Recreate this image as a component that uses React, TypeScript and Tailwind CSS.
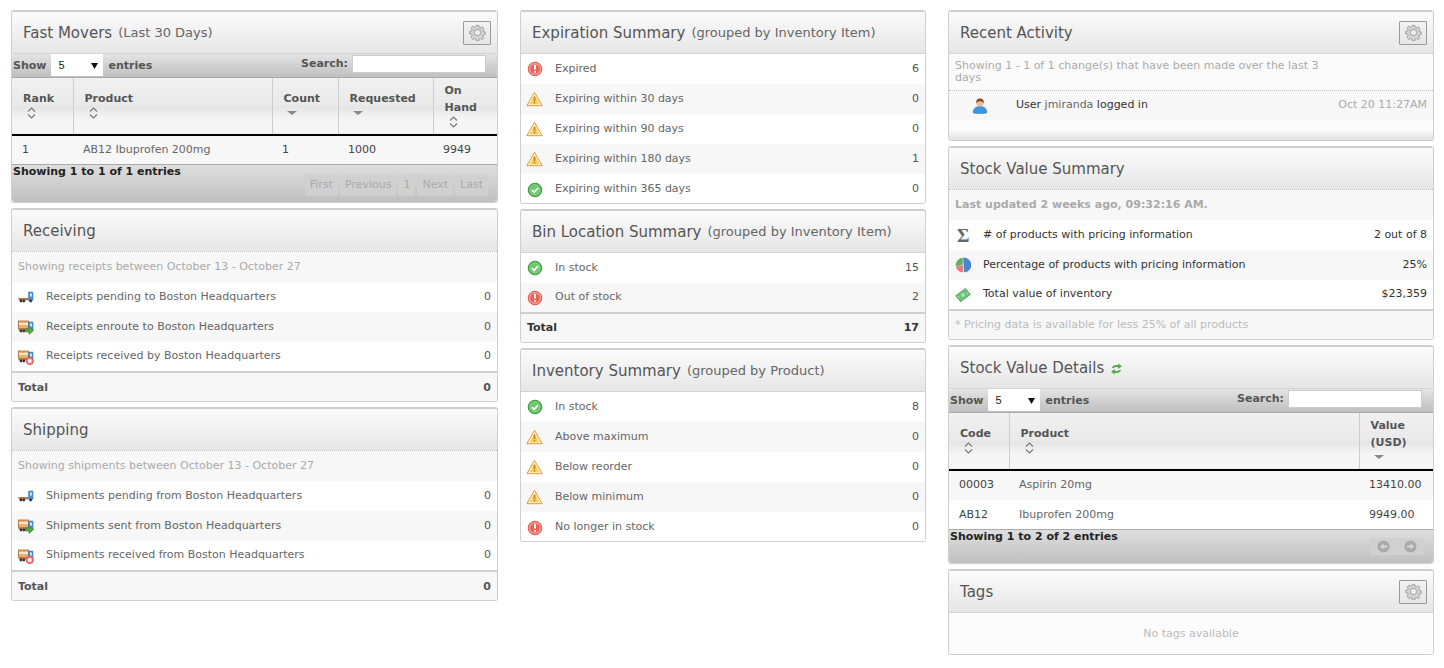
import type { ReactNode } from 'react'

const ErrorIcon = () => (
  <svg width="16" height="16" viewBox="0 0 16 16">
    <circle cx="8" cy="8" r="6.8" fill="#f58a80" stroke="#d9594f" />
    <circle cx="8" cy="8" r="5.2" fill="#ee5f55" stroke="#f9b5ae" strokeWidth="0.7" />
    <rect x="7" y="3.800" width="2" height="5" rx="0.8" fill="#fff" />
    <rect x="7" y="10" width="2" height="2" rx="0.8" fill="#fff" />
  </svg>
)

const WarnIcon = () => (
  <svg width="17" height="16" viewBox="0 0 17 16" className="-ml-[1px]">
    <path d="M8.500 1.300 16.200 14.700H.8Z" fill="#fff2c4" stroke="#e39a3f" strokeLinejoin="round" />
    <path d="M8.500 4.500 13.300 13.200H3.700Z" fill="#fbcf5e" />
    <rect x="7.700" y="5.600" width="1.600" height="4.400" fill="#c77f22" />
    <rect x="7.700" y="10.800" width="1.600" height="1.600" fill="#c77f22" />
  </svg>
)

const OkIcon = () => (
  <svg width="16" height="16" viewBox="0 0 16 16">
    <circle cx="8" cy="8" r="6.8" fill="#5cb85c" stroke="#3c963c" />
    <circle cx="8" cy="8" r="5" fill="#6cc66c" stroke="#a5e0a5" strokeWidth="0.6" />
    <path d="M5 8.200 7.200 10.400 11 6" fill="none" stroke="#fff" strokeWidth="1.800" />
  </svg>
)

const TruckBase = ({ box }: { box: boolean }) => (
  <>
    {box ? <rect x="0.500" y="2" width="10" height="7.500" fill="#e9b06f" stroke="#a8683a" strokeWidth="0.8" /> : null}
    {box ? <rect x="1" y="4" width="9" height="2" fill="#fbe6c8" /> : null}
    <rect x="0.500" y="9" width="10" height="2.400" fill="#b9794a" />
    <rect x="10.500" y="3" width="4.500" height="8.400" rx="0.6" fill="#4b93d6" stroke="#2a6aa8" strokeWidth="0.5" />
    <rect x="12" y="4.500" width="1.800" height="3" fill="#dbeeff" />
    <circle cx="3" cy="12" r="1.400" fill="#333" />
    <circle cx="5.800" cy="12" r="1.400" fill="#333" />
    <circle cx="12.600" cy="12" r="1.400" fill="#333" />
  </>
)

const TruckPending = () => (
  <svg width="16" height="16" viewBox="0 0 16 16">
    <TruckBase box={false} />
  </svg>
)

const TruckSent = () => (
  <svg width="16" height="16" viewBox="0 0 16 16">
    <TruckBase box />
    <path d="M7.500 10h3.500V7.600l4.600 3.900-4.600 3.900V13H7.500Z" fill="#55a846" stroke="#2f7d2a" strokeWidth="0.6" />
  </svg>
)

const TruckReceived = () => (
  <svg width="16" height="16" viewBox="0 0 16 16">
    <TruckBase box />
    <circle cx="11.800" cy="12" r="3.600" fill="#f08a8a" stroke="#d9534f" />
    <rect x="10.200" y="10.500" width="3.200" height="3" fill="#fff" />
  </svg>
)

const UserIcon = () => (
  <svg width="16" height="16" viewBox="0 0 16 16">
    <path d="M1.200 14.800c0-4.300 2.800-6.300 6.800-6.300s6.800 2 6.800 6.300c-1.500 1-12.100 1-13.600 0Z" fill="#3f94e0" stroke="#2568a8" strokeWidth="0.5" />
    <circle cx="8" cy="5" r="3.600" fill="#eebd97" />
    <path d="M4.200 5.400C3.900 1.800 5.800.6 8 .6s4.100 1.200 3.800 4.800C10.800 3.500 9 3.200 8 3.200s-2.800.3-3.800 2.200Z" fill="#8a4a24" />
  </svg>
)

const PieIcon = () => (
  <svg width="16" height="16" viewBox="0 0 16 16">
    <path d="M8.600 1A7 7 0 0 1 9.400 15Z" fill="#4a86d8" stroke="#2d62ab" strokeWidth="0.5" />
    <path d="M7.400 1.200A7 7 0 0 0 1.100 9L7.400 7.600Z" fill="#5fb36a" stroke="#3d8c48" strokeWidth="0.5" />
    <path d="M1.400 10 7.600 8.800V15A7 7 0 0 1 1.400 10Z" fill="#ef7a7a" stroke="#cf4f4f" strokeWidth="0.5" />
  </svg>
)

const MoneyIcon = () => (
  <svg width="16" height="16" viewBox="0 0 16 16">
    <path d="M.6 8.800 10.400 1.400l5 6-9.800 7.400Z" fill="#6cc07a" stroke="#449a52" strokeWidth="0.7" />
    <circle cx="8" cy="8.100" r="2" fill="#a7e3b0" />
    <path d="M3 9 4.400 10.600M11.800 5.400 13 7" stroke="#d2f2d6" strokeWidth="0.8" />
  </svg>
)

const RefreshIcon = () => (
  <svg width="13" height="14" viewBox="0 0 13 14">
    <path d="M2 6C2.600 3.400 5.600 2.600 8.200 3.400V1.400L12 4.200 8.200 7V5.200C6.400 4.600 4.600 5 3.800 6Z" fill="#55a846" />
    <path d="M11 8c-.6 2.600-3.600 3.400-6.200 2.600v2L1 9.800 4.800 7v1.800c1.800.6 3.600.2 4.400-.8Z" fill="#55a846" />
  </svg>
)

const GearIcon = () => (
  <svg width="17" height="17" viewBox="0 0 24 24" fill="#d4d4d4" stroke="#9a9a9a" strokeWidth="1.300" strokeLinejoin="round">
    <path d="M10.200 2h3.600l.5 2.700 1.900.8 2.300-1.500 2.500 2.500-1.500 2.300.8 1.900 2.700.5v3.600l-2.700.5-.8 1.900 1.500 2.300-2.500 2.500-2.300-1.500-1.900.8-.5 2.700h-3.600l-.5-2.700-1.900-.8-2.300 1.500L3 18.500l1.500-2.300-.8-1.900L1 13.800v-3.600l2.700-.5.8-1.900L3 5.500 5.500 3l2.300 1.500 1.900-.8Z" />
    <circle cx="12" cy="12" r="4.500" fill="#ececec" />
  </svg>
)

const SortBoth = () => (
  <svg width="9" height="12" viewBox="0 0 9 12" fill="none" stroke="#777" strokeWidth="1.100" className="ml-[4px]">
    <path d="M1 4.500 4.500 1 8 4.500M1 7.500 4.500 11 8 7.500" />
  </svg>
)

const SortDesc = () => (
  <svg width="10" height="12" viewBox="0 0 10 12" className="ml-[3px]">
    <path d="M0 4h10L5 8Z" fill="#888" />
  </svg>
)

const GearButton = () => (
  <button className="flex h-[24px] w-[28px] items-center justify-center rounded-[1px] border border-[#999] bg-gradient-to-b from-[#f2f2f2] to-[#e6e6e6]">
    <GearIcon />
  </button>
)

function Panel({ children }: { children: ReactNode }) {
  return (
    <section className="overflow-hidden rounded-[3px] border border-t-2 border-[#cfcfcf] bg-white">{children}</section>
  )
}

function Header({ title, sub, dotted, gear, extra }: { title: string; sub?: string; dotted?: boolean; gear?: boolean; extra?: ReactNode }) {
  return (
    <div
      className={`flex h-[42px] items-center justify-between bg-gradient-to-b from-[#fbfbfb] to-[#e6e6e6] pl-[11px] pr-[6px] ${
        dotted ? 'border-b border-dotted border-[#bbb]' : 'border-b border-[#d4d4d4]'
      }`}
    >
      <h2 className="flex items-center pt-[1px] text-[15px] font-normal text-[#555]">
        {title}
        {sub ? <span className="ml-[6px] text-[13px] text-[#666]">{sub}</span> : null}
        {extra}
      </h2>
      {gear ? <GearButton /> : null}
    </div>
  )
}

function Row({ icon, label, value, even, strong, height = 'h-[30px]' }: { icon: ReactNode; label: string; value: string; even?: boolean; strong?: boolean; height?: string }) {
  return (
    <div className={`flex items-center px-[6px] ${height} ${even ? 'bg-[#f7f7f7]' : 'bg-white'}`}>
      <span className="flex w-[28px] shrink-0">{icon}</span>
      <span className={`flex-1 ${strong ? 'text-[#333]' : 'text-[#666]'}`}>{label}</span>
      <span className={strong ? 'text-[#333]' : 'text-[#555]'}>{value}</span>
    </div>
  )
}

const Total = ({ value }: { value: string }) => (
  <div className="flex h-[30px] items-center justify-between border-t-2 border-[#cfcfcf] bg-[#f7f7f7] px-[6px] pt-[2px] font-bold text-[#555]">
    <span>Total</span>
    <span>{value}</span>
  </div>
)

const Note = ({ children, bold }: { children: ReactNode; bold?: boolean }) => (
  <div className={`flex h-[30px] items-center bg-[#f7f7f7] px-[6px] text-[#aaa] ${bold ? 'font-bold' : ''}`}>{children}</div>
)

function Toolbar() {
  return (
    <div className="flex h-[24px] items-start justify-between rounded-t-[3px] border-b border-[#aaa] bg-gradient-to-b from-[#e4e4e4] to-[#bfbfbf] pl-[1px] pr-[11px] font-bold text-[#555]">
      <div className="flex items-center">
        <span className="pt-[3px]">Show</span>
        <div className="mx-[5px] flex h-[22px] w-[52px] items-center justify-between bg-white pl-[7px] pr-[5px] font-normal text-[#222] [font-family:'Liberation_Sans',sans-serif]">
          <span>5</span>
          <svg width="7" height="7" viewBox="0 0 7 7">
            <path d="M0 1h7L3.500 7Z" fill="#111" />
          </svg>
        </div>
        <span className="pt-[3px]">entries</span>
      </div>
      <label className="flex items-center gap-[4px] pt-[1px]">
        Search:
        <input className="h-[18px] w-[134px] border border-[#ccc] bg-white" />
      </label>
    </div>
  )
}

function HeadCell({ lines, sort, width }: { lines: string[]; sort: ReactNode; width?: string }) {
  return (
    <th className={`border-r border-[#ccc] pl-[11px] pr-[4px] text-left align-middle font-bold leading-[17px] text-[#555] last:border-r-0 ${width ?? ''}`}>
      {lines.map((l) => (
        <div key={l}>{l}</div>
      ))}
      <div className="flex h-[15px] items-start">{sort}</div>
    </th>
  )
}

const headBg = 'bg-[linear-gradient(to_bottom,#f1f1f1_0%,#e9e9e9_50%,#e3e3e3_50%,#f5f5f5_75%,#f5f5f5_100%)]'

function FastMovers() {
  return (
    <Panel>
      <Header title="Fast Movers" sub="(Last 30 Days)" gear />
      <Toolbar />
      <table className="w-full table-fixed border-collapse">
        <thead>
          <tr className={`h-[57px] border-b-2 border-black ${headBg}`}>
            <HeadCell lines={['Rank']} sort={<SortBoth />} width="w-[61px]" />
            <HeadCell lines={['Product']} sort={<SortBoth />} width="w-[199px]" />
            <HeadCell lines={['Count']} sort={<SortDesc />} width="w-[66px]" />
            <HeadCell lines={['Requested']} sort={<SortDesc />} width="w-[95px]" />
            <HeadCell lines={['On', 'Hand']} sort={<SortBoth />} />
          </tr>
        </thead>
        <tbody>
          <tr className="h-[29px] bg-[#f7f7f7] text-[#444]">
            <td className="pl-[10px]">1</td>
            <td className="pl-[10px] text-[#666]">AB12 Ibuprofen 200mg</td>
            <td className="pl-[10px]">1</td>
            <td className="pl-[10px]">1000</td>
            <td className="pl-[10px]">9949</td>
          </tr>
        </tbody>
      </table>
      <div className="flex h-[38px] flex-col rounded-b-[3px] border-t border-[#aaa] bg-gradient-to-b from-[#dedede] to-[#c0c0c0] pl-[1px] pr-[9px]">
        <div className="h-[13px] font-bold leading-[13px] text-[#222]">Showing 1 to 1 of 1 entries</div>
        <div className="-mt-[4px] flex justify-end gap-[2px] text-[#aaa]">
          {['First', 'Previous', '1', 'Next', 'Last'].map((p) => (
            <span key={p} className="flex h-[22px] items-center rounded-[2px] bg-[#d0d0d0] px-[5px]">
              {p}
            </span>
          ))}
        </div>
      </div>
    </Panel>
  )
}

function Flow({ title, note, rows }: { title: string; note: string; rows: [ReactNode, string][] }) {
  return (
    <Panel>
      <Header title={title} dotted />
      <Note>{note}</Note>
      {rows.map(([icon, label], i) => (
        <Row key={label} icon={icon} label={label} value="0" even={i % 2 === 1} height={i === 2 ? 'h-[29px]' : 'h-[30px]'} />
      ))}
      <Total value="0" />
    </Panel>
  )
}

function Summary({ title, sub, rows, total }: { title: string; sub: string; rows: [ReactNode, string, string][]; total?: string }) {
  const lastRow = total ? 'h-[29px]' : 'h-[29px] pt-[2px]'
  return (
    <Panel>
      <Header title={title} sub={sub} />
      {rows.map(([icon, label, value], i) => (
        <Row key={label} icon={icon} label={label} value={value} even={i % 2 === 1} height={i === rows.length - 1 ? lastRow : 'h-[30px]'} />
      ))}
      {total ? (
        <div className="flex h-[30px] items-center justify-between border-t-2 border-[#cfcfcf] bg-[#f7f7f7] px-[6px] font-bold text-[#333]">
          <span>Total</span>
          <span>{total}</span>
        </div>
      ) : null}
    </Panel>
  )
}

function RecentActivity() {
  return (
    <Panel>
      <Header title="Recent Activity" gear />
      <div className="h-[37px] border-b border-dotted border-[#bbb] bg-[#fafafa] px-[6px] pt-[6px] leading-[12px] text-[#aaa]">
        <p className="w-[380px]">Showing 1 - 1 of 1 change(s) that have been made over the last 3 days</p>
      </div>
      <div className="flex h-[29px] items-center bg-[#f7f7f7] pl-[23px] pr-[6px]">
        <span className="flex w-[44px]">
          <UserIcon />
        </span>
        <span className="flex-1 text-[#333]">
          User <span className="text-[#666]">jmiranda</span> logged in
        </span>
        <span className="text-[#aaa]">Oct 20 11:27AM</span>
      </div>
      <div className="h-[20px] bg-gradient-to-b from-[#fdfdfd] via-[#fafafa] to-[#e0e0e0]" />
    </Panel>
  )
}

function StockSummary() {
  return (
    <Panel>
      <Header title="Stock Value Summary" dotted />
      <Note bold>Last updated 2 weeks ago, 09:32:16 AM.</Note>
      <Row icon={<span className="ml-[2px] text-[19px] font-bold leading-none text-[#666] [font-family:'Liberation_Serif',serif]">Σ</span>} label="# of products with pricing information" value="2 out of 8" strong />
      <Row icon={<PieIcon />} label="Percentage of products with pricing information" value="25%" even strong />
      <Row icon={<MoneyIcon />} label="Total value of inventory" value="$23,359" strong height="h-[29px]" />
      <div className="flex h-[30px] items-center border-t-2 border-[#cfcfcf] bg-[#f7f7f7] px-[6px] text-[#bbb]">
        * Pricing data is available for less 25% of all products
      </div>
    </Panel>
  )
}

function StockDetails() {
  return (
    <Panel>
      <Header title="Stock Value Details" extra={<span className="ml-[6px] mt-[2px] flex"><RefreshIcon /></span>} />
      <Toolbar />
      <table className="w-full table-fixed border-collapse">
        <thead>
          <tr className={`h-[57px] border-b-2 border-black ${headBg}`}>
            <HeadCell lines={['Code']} sort={<SortBoth />} width="w-[60px]" />
            <HeadCell lines={['Product']} sort={<SortBoth />} width="w-[350px]" />
            <HeadCell lines={['Value', '(USD)']} sort={<SortDesc />} />
          </tr>
        </thead>
        <tbody>
          <tr className="h-[30px] bg-[#f7f7f7] text-[#444]">
            <td className="pl-[10px]">00003</td>
            <td className="pl-[10px] text-[#666]">Aspirin 20mg</td>
            <td className="pl-[10px]">13410.00</td>
          </tr>
          <tr className="h-[29px] bg-white text-[#444]">
            <td className="pl-[10px] pt-[2px]">AB12</td>
            <td className="pl-[10px] pt-[2px] text-[#666]">Ibuprofen 200mg</td>
            <td className="pl-[10px] pt-[2px]">9949.00</td>
          </tr>
        </tbody>
      </table>
      <div className="flex h-[34px] flex-col rounded-b-[3px] border-t border-[#aaa] bg-gradient-to-b from-[#dedede] to-[#c0c0c0] pl-[1px] pr-[9px]">
        <div className="h-[13px] font-bold leading-[13px] text-[#222]">Showing 1 to 2 of 2 entries</div>
        <div className="-mt-[5px] flex justify-end">
          <span className="flex h-[17px] w-[54px] items-center justify-around rounded-[2px] bg-[#d0d0d0]">
            <svg width="13" height="13" viewBox="0 0 13 13">
              <circle cx="6.500" cy="6.500" r="6" fill="#aaa" />
              <path d="M3 6.500 6.500 3.500v2h3.500v2H6.500v2Z" fill="#d8d8d8" />
            </svg>
            <svg width="13" height="13" viewBox="0 0 13 13">
              <circle cx="6.500" cy="6.500" r="6" fill="#aaa" />
              <path d="M10 6.500 6.500 3.500v2H3v2h3.500v2Z" fill="#d8d8d8" />
            </svg>
          </span>
        </div>
      </div>
    </Panel>
  )
}

function Tags() {
  return (
    <Panel>
      <Header title="Tags" gear />
      <div className="flex h-[41px] items-center justify-center bg-[#fcfcfc] pt-[1px] text-[#bbb]">No tags available</div>
    </Panel>
  )
}

export default function App() {
  return (
    <div className="flex min-h-screen items-start gap-[22px] bg-white pl-[11px] pt-[10px] text-[11px] [font-family:'DejaVu_Sans',sans-serif]">
      <div className="flex w-[487px] flex-col gap-[5px]">
        <FastMovers />
        <Flow
          title="Receiving"
          note="Showing receipts between October 13 - October 27"
          rows={[
            [<TruckPending />, 'Receipts pending to Boston Headquarters'],
            [<TruckSent />, 'Receipts enroute to Boston Headquarters'],
            [<TruckReceived />, 'Receipts received by Boston Headquarters'],
          ]}
        />
        <Flow
          title="Shipping"
          note="Showing shipments between October 13 - October 27"
          rows={[
            [<TruckPending />, 'Shipments pending from Boston Headquarters'],
            [<TruckSent />, 'Shipments sent from Boston Headquarters'],
            [<TruckReceived />, 'Shipments received from Boston Headquarters'],
          ]}
        />
      </div>
      <div className="flex w-[406px] flex-col gap-[5px]">
        <Summary
          title="Expiration Summary"
          sub="(grouped by Inventory Item)"
          rows={[
            [<ErrorIcon />, 'Expired', '6'],
            [<WarnIcon />, 'Expiring within 30 days', '0'],
            [<WarnIcon />, 'Expiring within 90 days', '0'],
            [<WarnIcon />, 'Expiring within 180 days', '1'],
            [<OkIcon />, 'Expiring within 365 days', '0'],
          ]}
        />
        <Summary
          title="Bin Location Summary"
          sub="(grouped by Inventory Item)"
          rows={[
            [<OkIcon />, 'In stock', '15'],
            [<ErrorIcon />, 'Out of stock', '2'],
          ]}
          total="17"
        />
        <Summary
          title="Inventory Summary"
          sub="(grouped by Product)"
          rows={[
            [<OkIcon />, 'In stock', '8'],
            [<WarnIcon />, 'Above maximum', '0'],
            [<WarnIcon />, 'Below reorder', '0'],
            [<WarnIcon />, 'Below minimum', '0'],
            [<ErrorIcon />, 'No longer in stock', '0'],
          ]}
        />
      </div>
      <div className="flex w-[486px] flex-col gap-[5px]">
        <RecentActivity />
        <StockSummary />
        <StockDetails />
        <Tags />
      </div>
    </div>
  )
}
